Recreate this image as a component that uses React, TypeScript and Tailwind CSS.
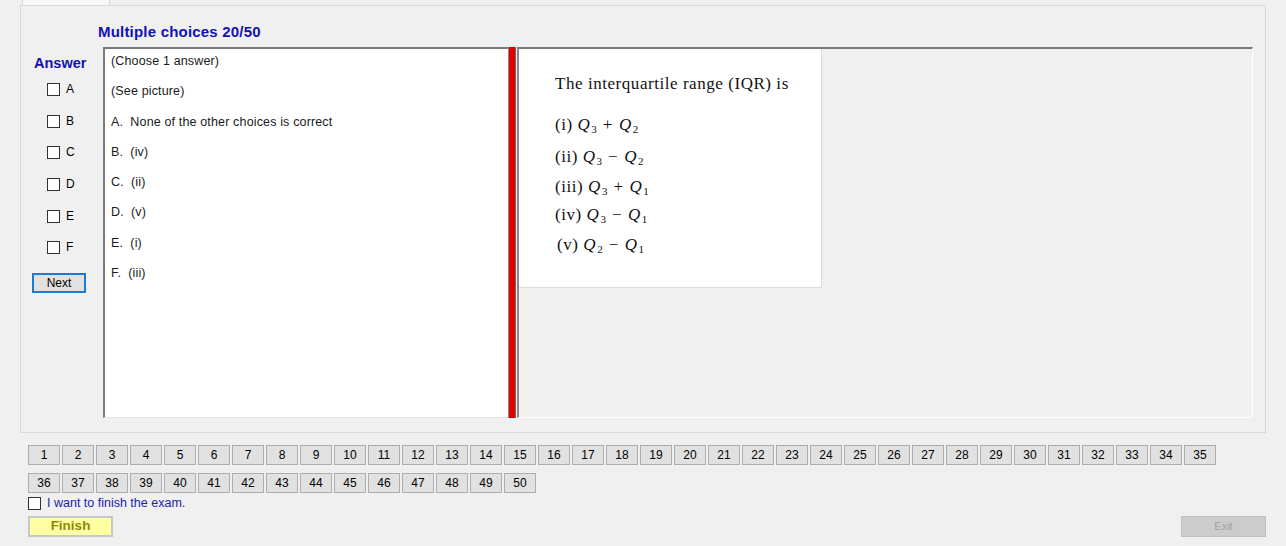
import React from 'react';

const answers = ['A', 'B', 'C', 'D', 'E', 'F'];

const lines = [
  '(Choose 1 answer)',
  '(See picture)',
  'A.  None of the other choices is correct',
  'B.  (iv)',
  'C.  (ii)',
  'D.  (v)',
  'E.  (i)',
  'F.  (iii)',
];

const Box: React.FC = () => (
  <span className="inline-block w-[13px] h-[13px] border border-[#333333] bg-white" />
);

// Q with subscript, in the picture
const Q: React.FC<{ n: number }> = ({ n }) => (
  <span>
    <i>Q</i>
    <sub className="text-[11px] tracking-normal ml-[1px]">{n}</sub>
  </span>
);

const Expr: React.FC<{ label: string; a: number; op: string; b: number; className?: string }> = ({
  label,
  a,
  op,
  b,
  className,
}) => (
  <div className={`leading-[20px] whitespace-pre ${className ?? ''}`}>
    {label} <Q n={a} />
    <span className="mx-[6px]">{op}</span>
    <Q n={b} />
  </div>
);

const App: React.FC = () => {
  const nums = Array.from({ length: 50 }, (_, i) => i + 1);

  return (
    <div
      className="w-full h-[546px] overflow-hidden bg-[#f0f0f0] text-black"
      style={{ fontFamily: '"Liberation Sans", Arial, sans-serif' }}
    >
      {/* tab strip */}
      <div className="h-[5px] flex">
        <div className="ml-[22px] w-[88px] h-full bg-[#f9f9f9] border-x border-[#d9d9d9]" />
      </div>

      {/* tab page */}
      <div className="ml-[20px] w-[1246px] h-[428px] border border-[#dadada]">
        <div className="mt-[18px] pl-[77px] text-[15px] leading-[16px] font-bold text-[#1212b4] tracking-[0.2px]">
          Multiple choices 20/50
        </div>

        <div className="mt-[7px] flex items-start">
          {/* answer column */}
          <div className="w-[82px] flex flex-col">
            <div className="mt-[8px] pl-[13px] text-[14.5px] leading-[16px] font-bold text-[#1212b4]">
              Answer
            </div>
            <div className="mt-[3px]">
              {answers.map((a) => (
                <div key={a} className="h-[31.6px] flex items-center pl-[26px] gap-[6px] text-[12px]">
                  <Box />
                  <span className="leading-[13px]">{a}</span>
                </div>
              ))}
            </div>
            <div className="mt-[9px] ml-[11px] w-[54px] h-[20px] bg-[#e1e1e1] border-2 border-[#1a7bd6] flex items-center justify-center text-[12px]">
              Next
            </div>
          </div>

          {/* choices text */}
          <div className="w-[405px] h-[371px] bg-white border-t-2 border-l-2 border-t-[#7a7a7a] border-l-[#7a7a7a] border-b border-b-[#e3e3e3] pt-[5px] pl-[6px] text-[12.5px] tracking-[0.15px] text-[#1a1a1a]">
            {lines.map((l) => (
              <div key={l} className="h-[30.3px] leading-[14px] whitespace-pre">
                {l}
              </div>
            ))}
          </div>

          {/* splitter */}
          <div className="w-[8px] h-[371px] bg-[#e00000] border-l border-r border-l-[#8a8a8a] border-r-[#6a6a6a]" />

          {/* picture panel */}
          <div className="ml-[1px] w-[736px] h-[371px] border-t-2 border-l-2 border-t-[#7a7a7a] border-l-[#8a8a8a] border-r border-b border-r-[#fdfdfd] border-b-[#fdfdfd]">
            <div
              className="w-[303px] h-[239px] bg-white border-r border-b border-[#dcdcdc] pt-[25px] pl-[36px] text-[17px] tracking-[0.55px] text-[#111111]"
              style={{ fontFamily: '"Liberation Serif", "DejaVu Serif", serif' }}
            >
              <div className="leading-[20px]">The interquartile range (IQR) is</div>
              <Expr className="mt-[21px]" label="(i)" a={3} op="+" b={2} />
              <Expr className="mt-[12px]" label="(ii)" a={3} op="−" b={2} />
              <Expr className="mt-[10px]" label="(iii)" a={3} op="+" b={1} />
              <Expr className="mt-[8px]" label="(iv)" a={3} op="−" b={1} />
              <Expr className="mt-[10px] pl-[2px]" label="(v)" a={2} op="−" b={1} />
            </div>
          </div>
        </div>
      </div>

      {/* question numbers */}
      <div className="mt-[12px] ml-[28px] w-[1190px] flex flex-wrap gap-x-[2px] gap-y-[8px]">
        {nums.map((n) => (
          <div
            key={n}
            className="w-[32px] h-[20px] bg-[#e1e1e1] border border-[#adadad] flex items-center justify-center text-[12px]"
          >
            {n}
          </div>
        ))}
      </div>

      <div className="mt-[4px] ml-[28px] flex items-center gap-[6px] h-[13px]">
        <Box />
        <span className="text-[12.5px] leading-[13px] text-[#1c1cae]">I want to finish the exam.</span>
      </div>

      <div className="mt-[6px] pl-[28px] pr-[20px] flex justify-between">
        <div className="w-[85px] h-[21px] bg-[#ffffa3] border-2 border-[#c8c8c8] flex items-center justify-center text-[13.5px] font-bold text-[#8c8c00]">
          Finish
        </div>
        <div className="w-[85px] h-[21px] bg-[#cccccc] border border-[#bfbfbf] flex items-center justify-center text-[11px] text-[#a3a3a3]">
          Exit
        </div>
      </div>
    </div>
  );
};

export default App;
